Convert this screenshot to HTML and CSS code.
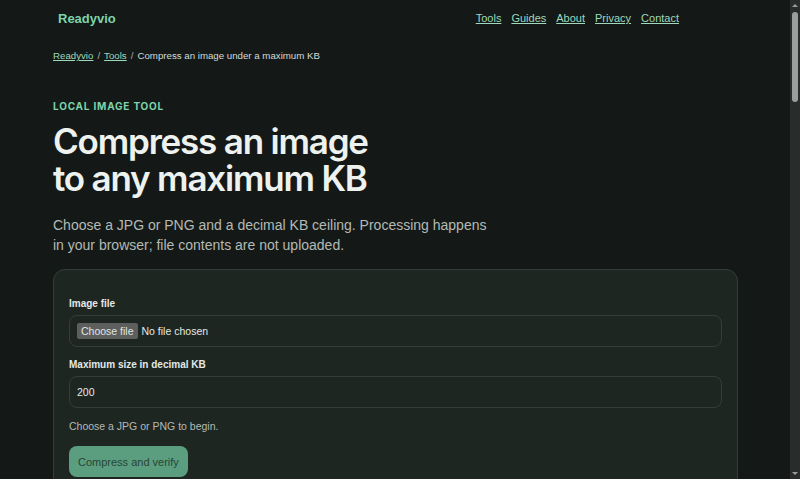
FILE: index.html
```html
<!DOCTYPE html>
<html>
<head>
  <title>Compress an image under a maximum KB | Readyvio</title>
  <link rel="stylesheet" href="styles.css">
</head>
<body>
  <header class="site-header">
    <a class="logo" href="#">Readyvio</a>
    <nav class="nav">
      <a href="#">Tools</a>
      <a href="#">Guides</a>
      <a href="#">About</a>
      <a href="#">Privacy</a>
      <a href="#">Contact</a>
    </nav>
  </header>

  <main class="page">
    <div class="breadcrumb">
      <a href="#">Readyvio</a>
      <span class="sep">/</span>
      <a href="#">Tools</a>
      <span class="sep">/</span>
      <span>Compress an image under a maximum KB</span>
    </div>

    <p class="eyebrow">Local image tool</p>
    <h1>Compress an image<br>to any maximum KB</h1>
    <p class="lead">Choose a JPG or PNG and a decimal KB ceiling. Processing happens in your browser; file contents are not uploaded.</p>

    <section class="tool-card">
      <label class="field-label" for="file">Image file</label>
      <div class="field file-field">
        <span class="file-btn">Choose file</span>
        <span class="file-name">No file chosen</span>
      </div>

      <label class="field-label" for="maxkb">Maximum size in decimal KB</label>
      <div class="field">200</div>

      <p class="hint">Choose a JPG or PNG to begin.</p>

      <button class="primary" disabled>Compress and verify</button>

      <div class="spacer"></div>
    </section>
  </main>

  <!-- window scrollbar -->
  <div class="scrollbar">
    <span class="arrow up"></span>
    <span class="thumb"></span>
    <span class="arrow down"></span>
  </div>
</body>
</html>
```

FILE: styles.css
```css
:root {
  --bg: #141917;
  --card: #1e2622;
  --border: #343e38;
  --accent: #7ed3aa;
  --link: #9fd8bb;
  --text: #eef2ef;
  --muted: #b3bab5;
}

html {
  color-scheme: dark;
}

body {
  margin: 0;
  background: var(--bg);
  color: var(--text);
  font-family: "Liberation Sans", Arial, sans-serif;
}

a {
  color: var(--link);
}

.site-header {
  display: flex;
  align-items: center;
  justify-content: space-between;
  height: 36px;
  padding: 0 121px 0 58px;
}

.logo {
  color: var(--accent);
  font-size: 13px;
  font-weight: 700;
  text-decoration: none;
}

.nav {
  display: flex;
  gap: 10px;
  font-size: 11px;
}

.page {
  padding: 0 62px 0 53px;
}

.breadcrumb {
  margin-top: 14px;
  font-size: 9.7px;
  color: #d5dbd7;
  display: flex;
  gap: 4px;
}

.breadcrumb .sep {
  color: #aab2ad;
}

.eyebrow {
  margin: 39px 0 0;
  font-family: Inter, sans-serif;
  font-size: 10px;
  font-weight: 700;
  letter-spacing: 0.08em;
  text-transform: uppercase;
  color: var(--accent);
}

h1 {
  margin: 11px 0 0;
  font-family: Inter, sans-serif;
  font-size: 35px;
  font-weight: 600;
  line-height: 37px;
  letter-spacing: -1.2px;
  color: var(--text);
}

.lead {
  margin: 18px 0 0;
  max-width: 445px;
  font-size: 14px;
  line-height: 20px;
  color: var(--muted);
}

.tool-card {
  margin-top: 14px;
  padding: 28px 15px 0;
  background: var(--card);
  border: 1px solid var(--border);
  border-radius: 12px;
}

.field-label {
  display: block;
  font-size: 10px;
  font-weight: 700;
  color: #e4e9e6;
  margin-bottom: 6px;
}

.field {
  display: flex;
  align-items: center;
  height: 30px;
  padding: 0 7px;
  border: 1px solid var(--border);
  border-radius: 8px;
  font-size: 10.5px;
  color: #e4e9e6;
  margin-bottom: 12px;
}

.file-btn {
  background: #5c5f5e;
  color: #e0e3e1;
  padding: 2px 4px;
  border-radius: 2px;
  margin-right: 4px;
}

.hint {
  margin: 12px 0 0;
  font-size: 10.5px;
  color: #b3bab5;
}

.primary {
  margin-top: 14px;
  padding: 0 9px;
  height: 31px;
  border: none;
  border-radius: 8px;
  background: #5b9e7f;
  color: #284536;
  font-family: inherit;
  font-size: 11px;
}

.spacer {
  height: 60px;
}

.scrollbar {
  position: fixed;
  top: 0;
  right: 0;
  bottom: 0;
  width: 10px;
  background: #2a2b2b;
}

.scrollbar .thumb {
  position: absolute;
  left: 2px;
  top: 12px;
  width: 6px;
  height: 90px;
  border-radius: 3px;
  background: #9c9d9d;
}

.scrollbar .arrow {
  position: absolute;
  left: 2px;
  border-left: 3px solid transparent;
  border-right: 3px solid transparent;
}

.scrollbar .up {
  top: 4px;
  border-bottom: 3px solid #9c9d9d;
}

.scrollbar .down {
  bottom: 4px;
  border-top: 3px solid #9c9d9d;
}
```
